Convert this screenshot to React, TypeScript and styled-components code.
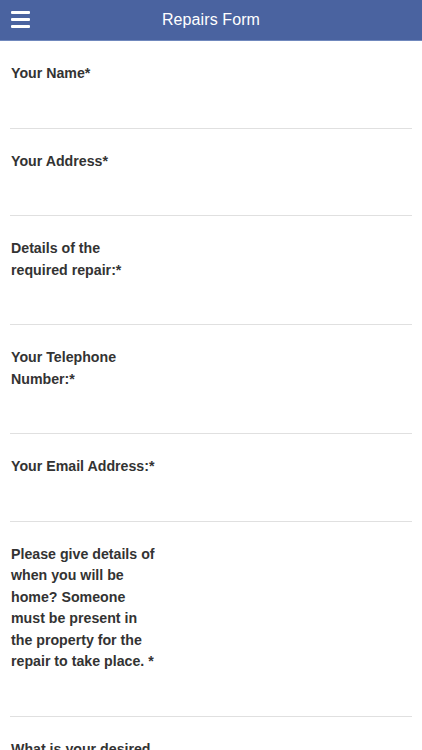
import styled, { createGlobalStyle } from "styled-components";

const GlobalStyle = createGlobalStyle`
  html, body {
    margin: 0;
    padding: 0;
    background: #ffffff;
    font-family: "Liberation Sans", Arial, Helvetica, sans-serif;
  }
`;

const Page = styled.div`
  width: 100%;
  min-height: 100vh;
  background: #ffffff;
`;

const Header = styled.header`
  position: relative;
  height: 40px;
  background: #4a63a0;
  border-bottom: 1px solid #7088bd;
  display: flex;
  align-items: center;
  justify-content: center;
`;

const MenuButton = styled.button`
  position: absolute;
  left: 11px;
  top: 11px;
  width: 19px;
  height: 17px;
  padding: 0;
  border: none;
  background: transparent;
  display: flex;
  flex-direction: column;
  justify-content: space-between;
  span {
    display: block;
    height: 3px;
    border-radius: 1px;
    background: #ffffff;
  }
`;

const Title = styled.h1`
  margin: 0;
  color: #ffffff;
  font-size: 16px;
  font-weight: 400;
  letter-spacing: 0.1px;
`;

const Form = styled.form`
  display: flex;
  flex-direction: column;
  padding: 0 10px;
`;

const Field = styled.div`
  padding-top: 22px;
  border-bottom: 1px solid #e0e0e0;
`;

const Label = styled.label`
  display: block;
  max-width: 146px;
  padding-left: 1px;
  color: #333333;
  font-size: 14.2px;
  font-weight: 700;
  line-height: 21.5px;
`;

const Input = styled.input`
  display: block;
  width: 100%;
  height: 43px;
  box-sizing: border-box;
  border: none;
  outline: none;
  background: transparent;
`;

const fields = [
  "Your Name*",
  "Your Address*",
  "Details of the required repair:*",
  "Your Telephone Number:*",
  "Your Email Address:*",
  "Please give details of when you will be home? Someone must be present in the property for the repair to take place. *",
  "What is your desired date for the repair?*",
];

function App() {
  return (
    <Page>
      <GlobalStyle />
      <Header>
        <MenuButton aria-label="Menu">
          <span />
          <span />
          <span />
        </MenuButton>
        <Title>Repairs Form</Title>
      </Header>
      <Form>
        {fields.map((f) => (
          <Field key={f}>
            <Label>{f}</Label>
            <Input />
          </Field>
        ))}
      </Form>
    </Page>
  );
}

export default App;
